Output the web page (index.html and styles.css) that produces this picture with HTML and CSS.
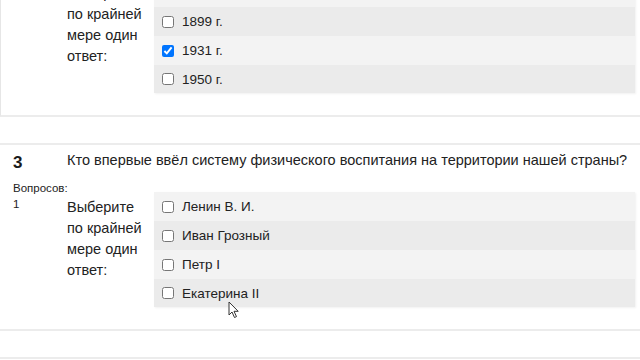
FILE: index.html
```html
<!DOCTYPE html>
<html lang="ru">
<head>
<meta charset="utf-8">
<title>Тест</title>
<link rel="stylesheet" href="styles.css">
</head>
<body>
<div class="page">
  <section class="card card-prev">
    <div class="info"></div>
    <div class="content">
      <div class="answer">
        <div class="prompt">Выберите по крайней мере один ответ:</div>
        <div class="options">
          <div class="opt opt-blank"></div>
          <label class="opt"><input type="checkbox"><span>1899 г.</span></label>
          <label class="opt"><input type="checkbox" checked><span>1931 г.</span></label>
          <label class="opt"><input type="checkbox"><span>1950 г.</span></label>
        </div>
      </div>
    </div>
  </section>

  <section class="card">
    <div class="info">
      <div class="qno">3</div>
      <div class="qcount">Вопросов:</div>
      <div class="qcount">1</div>
    </div>
    <div class="content">
      <div class="qtext">Кто впервые ввёл систему физического воспитания на территории нашей страны?</div>
      <div class="answer">
        <div class="prompt">Выберите по крайней мере один ответ:</div>
        <div class="options">
          <label class="opt"><input type="checkbox"><span>Ленин В. И.</span></label>
          <label class="opt"><input type="checkbox"><span>Иван Грозный</span></label>
          <label class="opt"><input type="checkbox"><span>Петр I</span></label>
          <label class="opt"><input type="checkbox"><span>Екатерина II</span></label>
        </div>
      </div>
    </div>
  </section>

  <section class="card card-next"></section>
</div>
<svg class="cursor" width="12" height="18" viewBox="0 0 12 18" aria-hidden="true">
  <path d="M1 1 L1 14 L4 11 L6.5 16.5 L8.5 15.6 L6 10.3 L10.2 10.3 Z" fill="#fff" stroke="#333" stroke-width="1" stroke-linejoin="round"/>
</svg>
</body>
</html>
```

FILE: styles.css
```css
html, body {
  margin: 0;
  padding: 0;
  background: #ffffff;
}

body {
  width: 640px;
  height: 360px;
  overflow: hidden;
  position: relative;
  font-family: "Liberation Sans", Arial, sans-serif;
  color: #222222;
}

.page {
  margin-top: -51px;
}

.card {
  display: flex;
  border-top: 2px solid #ececec;
  border-bottom: 2px solid #ececec;
  padding-right: 5px;
  margin-bottom: 26px;
}

.card-prev {
  border-left: 1px solid #e6e6e6;
}

.card-prev .info {
  width: 53px;
}

.card-next {
  height: 40px;
}

.info {
  width: 54px;
  padding-left: 13px;
  padding-top: 8px;
  flex: none;
}

.qno {
  font-size: 17px;
  font-weight: bold;
  line-height: 20px;
  color: #1a1a1a;
}

.qcount {
  font-size: 11.5px;
  line-height: 16px;
  color: #222222;
}

.qno + .qcount {
  margin-top: 7px;
}

.content {
  flex: 1;
  padding-top: 5px;
  padding-bottom: 22px;
}

.qtext {
  font-size: 14.5px;
  line-height: 20px;
  color: #222222;
}

.answer {
  display: flex;
  margin-top: 22px;
}

.prompt {
  width: 84px;
  margin-right: 3px;
  padding-top: 5px;
  font-size: 14.5px;
  line-height: 21px;
  color: #222222;
  flex: none;
}

.options {
  flex: 1;
  display: flex;
  flex-direction: column;
  box-shadow: 1px 1px 2px rgba(0, 0, 0, 0.06);
}

.opt {
  display: flex;
  align-items: center;
  height: 29px;
  padding-left: 8px;
  font-size: 13.5px;
  color: #222222;
  background: #f3f3f3;
}

.opt:nth-child(even) {
  background: #ebebeb;
}

.opt:last-child {
  height: 28px;
}

.opt input {
  width: 12px;
  height: 12px;
  margin: 0 8px 0 0;
  flex: none;
}

.cursor {
  position: absolute;
  left: 228px;
  top: 301px;
}
```
